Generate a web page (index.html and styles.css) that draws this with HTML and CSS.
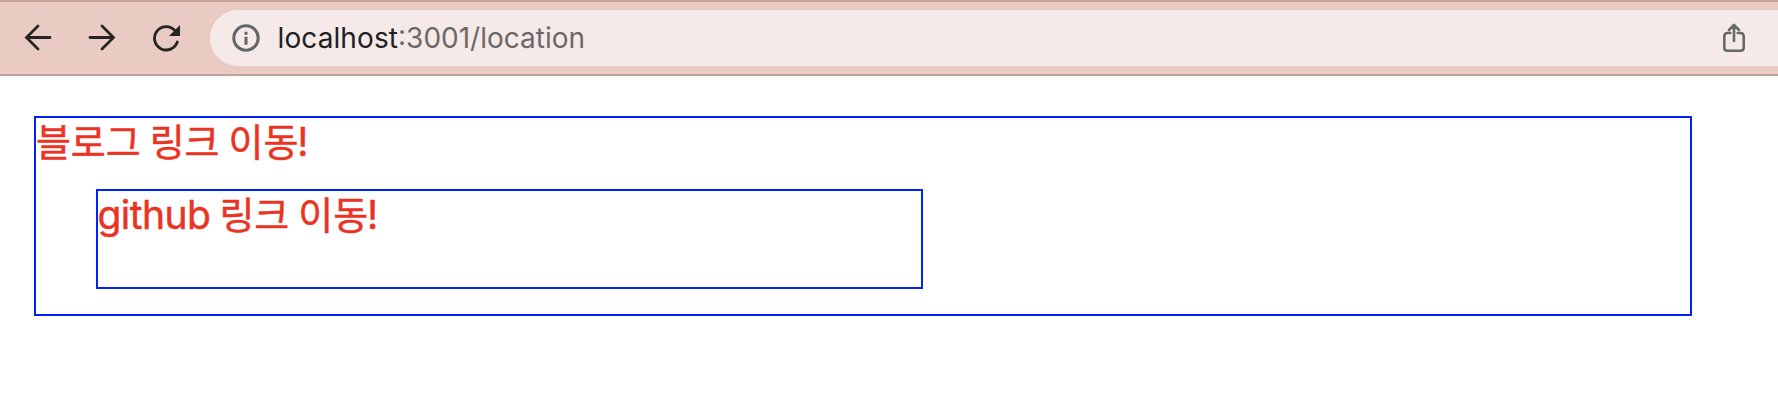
FILE: index.html
```html
<!DOCTYPE html>
<html lang="ko">
<head>
<meta charset="utf-8">
<title>location</title>
<link rel="stylesheet" href="styles.css">
</head>
<body>
<header class="toolbar">
  <nav class="nav">
    <svg class="nav-icon" width="28" height="28" viewBox="0 0 28 28"><path d="M26 13.5H3M14 2 2.5 13.5 14 25"/></svg>
    <svg class="nav-icon" width="28" height="28" viewBox="0 0 28 28"><path d="M2 13.5h23M14 2l11.5 11.5L14 25"/></svg>
    <svg class="nav-icon reload" width="28" height="28" viewBox="0 0 28 28"><path d="M25.3 18A11.7 11.7 0 1 1 22.5 6"/><path class="solid" d="M28 1v11H17z"/></svg>
  </nav>
  <div class="address">
    <svg class="info" width="28" height="28" viewBox="0 0 28 28"><circle cx="14" cy="14" r="12.2"/><path d="M14 12.8v8M14 7.8v3"/></svg>
    <div class="url"><span class="host">localhost</span><span class="path">:3001/location</span></div>
    <svg class="share" width="22" height="30" viewBox="0 0 22 30"><path d="M7.3 10H4.5Q1.3 10 1.3 13.2V24.5Q1.3 27.7 4.5 27.7H17.5Q20.7 27.7 20.7 24.5V13.2Q20.7 10 17.5 10H14.7M11 18V2.5M6 7 11 2l5 5"/></svg>
  </div>
</header>
<main class="outer">
  <div class="link">블로그 링크 이동<span class="mark">!</span></div>
  <div class="inner">
    <div class="link"><span class="latin">github</span> 링크 이동<span class="mark">!</span></div>
  </div>
</main>
</body>
</html>
```
FILE: styles.css
```css
* { box-sizing: border-box; }
body { margin: 0; background: #fff; overflow: hidden; }
.toolbar {
  display: flex;
  align-items: center;
  height: 76px;
  background: #e9cbc3;
  border-top: 2px solid #c9a498;
  border-bottom: 2px solid #bda19b;
}
.nav { display: flex; gap: 36px; padding-left: 24px; width: 210px; }
.nav-icon { fill: none; stroke: #262524; stroke-width: 2.8; stroke-linecap: round; stroke-linejoin: miter; }
.nav-icon .solid { fill: #262524; stroke: none; }
.address {
  flex: 1;
  display: flex;
  align-items: center;
  height: 56px;
  padding: 0 33px 0 22px;
  background: #f6eae8;
  border-radius: 28px 0 0 28px;
}
.info { fill: none; stroke: #62666b; stroke-width: 3; }
.url {
  flex: 1;
  padding-left: 17.5px;
  font: 28px/56px Inter, "Liberation Sans", sans-serif;
}
.host { color: #202124; letter-spacing: 0.1px; }
.path { color: #6b6968; letter-spacing: 0; }
.share { fill: none; stroke: #666968; stroke-width: 2.6; stroke-linecap: round; stroke-linejoin: round; }
.outer {
  width: 1658px;
  height: 200px;
  margin: 40px 0 0 34px;
  border: 2px solid #0023f5;
}
.inner {
  width: 827px;
  height: 100px;
  margin: 27px 0 0 60px;
  border: 2px solid #0023f5;
}
.link {
  height: 44px;
  color: #ea3323;
  font: 400 38px/44px "Noto Sans CJK KR", sans-serif;
  -webkit-text-stroke: 0.5px #ea3323;
  white-space: pre;
  word-spacing: -1.4px;
  letter-spacing: -0.1px;
}
.latin {
  margin-left: -0.5px;
  font: 400 39px/44px Inter, "Liberation Sans", sans-serif;
  letter-spacing: -0.55px;
}
.mark { font: 400 39px/44px Inter, sans-serif; margin-left: -1px; }
```
